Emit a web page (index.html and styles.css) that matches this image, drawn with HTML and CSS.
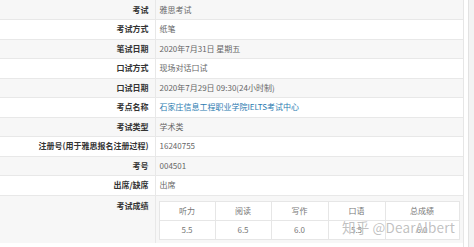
FILE: index.html
```html
<!DOCTYPE html>
<html lang="zh">
<head>
<meta charset="utf-8">
<link rel="stylesheet" href="styles.css">
</head>
<body>
<div class="page">
  <div class="panel">
    <table class="info">
      <tr class="odd"><th>考试</th><td>雅思考试</td></tr>
      <tr><th>考试方式</th><td>纸笔</td></tr>
      <tr class="odd"><th>笔试日期</th><td>2020年7月31日 星期五</td></tr>
      <tr><th>口试方式</th><td>现场对话口试</td></tr>
      <tr class="odd"><th>口试日期</th><td>2020年7月29日 09:30(24小时制)</td></tr>
      <tr><th>考点名称</th><td><a class="link">石家庄信息工程职业学院IELTS考试中心</a></td></tr>
      <tr class="odd"><th>考试类型</th><td>学术类</td></tr>
      <tr><th>注册号(用于雅思报名注册过程)</th><td>16240755</td></tr>
      <tr class="odd"><th>考号</th><td>004501</td></tr>
      <tr><th>出席/缺席</th><td>出席</td></tr>
      <tr class="odd score-row">
        <th class="top">考试成绩</th>
        <td class="score-cell">
          <table class="scores">
            <tr><td class="c1">听力</td><td class="c2">阅读</td><td class="c3">写作</td><td class="c4">口语</td><td class="c5">总成绩</td></tr>
            <tr><td>5.5</td><td>6.5</td><td>6.0</td><td>5.5</td><td>6.0</td></tr>
          </table>
        </td>
      </tr>
    </table>
    <div class="watermark">知乎 @DearAlbert</div>
  </div>
  <div class="gap"></div>
  <div class="side"></div>
</div>
</body>
</html>
```

FILE: styles.css
```css
html, body {
  margin: 0;
  padding: 0;
  background: #ffffff;
}
body {
  font-family: "Noto Sans CJK SC", "Noto Sans", sans-serif;
  font-size: 8px;
  color: #666;
  width: 474px;
  height: 247px;
  overflow: hidden;
}
.page {
  display: flex;
  height: 247px;
}
.panel {
  position: relative;
  width: 463px;
  border-right: 1px solid #e6e6e6;
  height: 247px;
  flex: none;
}
.gap {
  width: 4px;
  flex: none;
}
.side {
  flex: 1;
  border-left: 1px solid #e2e2e2;
  background: #f3f3f3;
}
.info {
  width: 463px;
  border-collapse: collapse;
  table-layout: fixed;
}
.info > tbody > tr > th,
.info > tbody > tr > td {
  height: 19.5px;
  padding: 0;
  border-bottom: 1px solid #e8e8e8;
  box-sizing: border-box;
  line-height: 12px;
  vertical-align: middle;
}
.info > tbody > tr > th {
  width: 155px;
  text-align: right;
  padding-right: 6px;
  color: #333;
  font-weight: 700;
  border-right: 1px solid #e8e8e8;
}
.info > tbody > tr > td {
  text-align: left;
  padding-left: 4px;
}
.info tr.odd {
  background: #f7f7f7;
}
.link {
  color: #2b7bb0;
}
.info > tbody > tr.score-row > th,
.info > tbody > tr.score-row > td {
  height: 48px;
  border-bottom: none;
}
.info > tbody > tr > th.top {
  vertical-align: top;
  padding-top: 4px;
}
.info > tbody > tr > td.score-cell {
  vertical-align: top;
  padding: 5px 0 0 3px;
}
.scores {
  border-collapse: collapse;
  background: #ffffff;
  table-layout: fixed;
  width: 300px;
}
.scores td {
  border: 1px solid #e6e6e6;
  height: 19px;
  padding: 0;
  text-align: center;
  color: #777;
  line-height: 12px;
  box-sizing: border-box;
}
.scores .c1 { width: 56px; }
.scores .c2 { width: 56px; }
.scores .c3 { width: 57px; }
.scores .c4 { width: 57px; }
.scores .c5 { width: 74px; }
.watermark {
  position: absolute;
  left: 342px;
  top: 219px;
  font-family: "Noto Sans CJK SC", "Noto Sans", sans-serif;
  font-size: 13.5px;
  line-height: 16px;
  color: rgba(140, 140, 140, 0.55);
  text-shadow: 0 0 1px rgba(255, 255, 255, 0.9);
  white-space: nowrap;
  letter-spacing: 0.2px;
}
```
